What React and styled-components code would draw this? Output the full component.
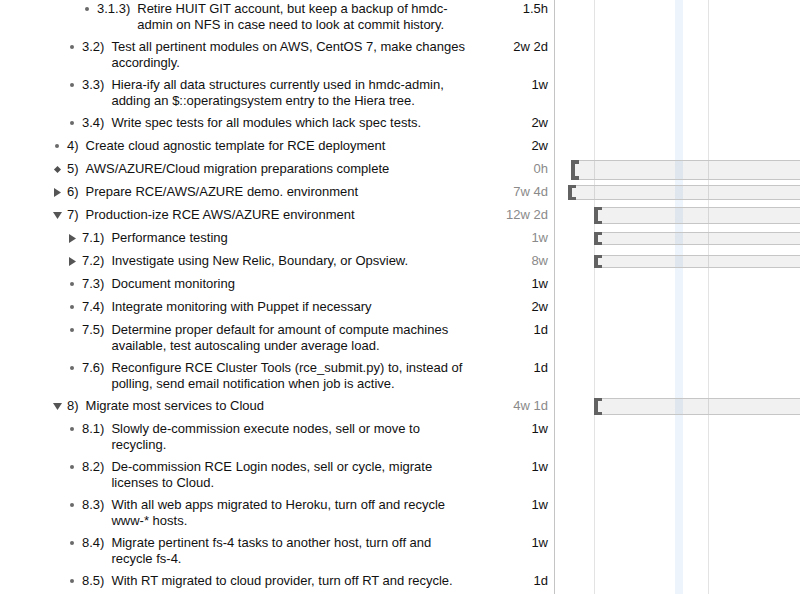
import styled, { createGlobalStyle } from "styled-components";

const GlobalStyle = createGlobalStyle`
  html, body {
    margin: 0;
    padding: 0;
    background: #fff;
    overflow: hidden;
  }
  body {
    font-family: "Liberation Sans", Arial, Helvetica, sans-serif;
    font-size: 13px;
    color: #111;
  }
`;

const Screen = styled.div`
  display: flex;
  flex-direction: column;
  height: 100vh;
  overflow: hidden;
`;

const List = styled.div`
  display: flex;
  flex-direction: column;
  margin-top: -2px;
  flex: 1;
`;

const Row = styled.div`
  display: grid;
  grid-template-columns: 470px 84px 1fr;
  min-height: 23px;
  flex: ${(p) => (p.$filler ? 1 : "none")};
`;

const OutlineCell = styled.div`
  display: flex;
  align-items: flex-start;
  padding: 3px 0 3px ${(p) => 37 + p.$level * 15}px;
  line-height: 16px;
`;

const MarkerBox = styled.span`
  flex: none;
  width: 10px;
  height: 16px;
  margin-right: 5px;
  display: flex;
  align-items: center;
  justify-content: center;
`;

const Bullet = styled.span`
  width: 4px;
  height: 4px;
  border-radius: 50%;
  background: #6a6a6a;
`;

const Diamond = styled.span`
  width: 5px;
  height: 5px;
  background: #505050;
  transform: rotate(45deg);
`;

const Number = styled.span`
  flex: none;
  margin-right: 7px;
`;

const Title = styled.span`
  flex: 1;
`;

const Duration = styled.div`
  padding: 3px 6px 3px 0;
  line-height: 16px;
  text-align: right;
  color: ${(p) => (p.$computed ? "#8a8a8a" : "#111")};
`;

const GanttCell = styled.div`
  border-left: 1px solid #c4c4c4;
  overflow: hidden;
  display: flex;
  flex-direction: column;
  align-items: flex-start;
  background-image: linear-gradient(
    to right,
    transparent 39px,
    #e3e3e3 39px,
    #e3e3e3 40px,
    transparent 40px,
    transparent 120px,
    #edf4fc 120px,
    #edf4fc 128px,
    transparent 128px,
    transparent 153px,
    #e3e3e3 153px,
    #e3e3e3 154px,
    transparent 154px
  );
`;

const Bar = styled.div`
  box-sizing: border-box;
  position: relative;
  width: 400px;
  height: ${(p) => p.$h}px;
  margin-top: ${(p) => p.$top}px;
  margin-left: ${(p) => p.$x}px;
  background: rgba(0, 0, 0, 0.055);
  border-top: 1px solid #c6c6c6;
  border-bottom: 1px solid #c6c6c6;

  &::before {
    content: "";
    position: absolute;
    left: 0;
    top: -1px;
    bottom: -1px;
    width: 8px;
    background: #626262;
  }
  &::after {
    content: "";
    position: absolute;
    left: 4px;
    width: 4px;
    top: ${(p) => (p.$h > 18 ? 3 : 2)}px;
    bottom: ${(p) => (p.$h > 18 ? 3 : 2)}px;
    background: #f1f1f1;
  }
`;

function Marker({ kind }) {
  if (kind === "bullet") return <MarkerBox><Bullet /></MarkerBox>;
  if (kind === "diamond") return <MarkerBox><Diamond /></MarkerBox>;
  if (kind === "closed")
    return (
      <MarkerBox>
        <svg width="7" height="9" viewBox="0 0 7 9">
          <polygon points="0,0 7,4.5 0,9" fill="#555" />
        </svg>
      </MarkerBox>
    );
  return (
    <MarkerBox>
      <svg width="9" height="7" viewBox="0 0 9 7">
        <polygon points="0,0 9,0 4.5,7" fill="#555" />
      </svg>
    </MarkerBox>
  );
}

const rows = [
  { lvl: 3, m: "bullet", n: "3.1.3)", t: "Retire HUIT GIT account, but keep a backup of hmdc-admin on NFS in case need to look at commit history.", d: "1.5h" },
  { lvl: 2, m: "bullet", n: "3.2)", t: "Test all pertinent modules on AWS, CentOS 7, make changes accordingly.", d: "2w 2d" },
  { lvl: 2, m: "bullet", n: "3.3)", t: "Hiera-ify all data structures currently used in hmdc-admin, adding an $::operatingsystem entry to the Hiera tree.", d: "1w" },
  { lvl: 2, m: "bullet", n: "3.4)", t: "Write spec tests for all modules which lack spec tests.", d: "2w" },
  { lvl: 1, m: "bullet", n: "4)", t: "Create cloud agnostic template for RCE deployment", d: "2w" },
  { lvl: 1, m: "diamond", n: "5)", t: "AWS/AZURE/Cloud migration preparations complete", d: "0h", c: true, bar: { x: 16, top: 2, h: 20 } },
  { lvl: 1, m: "closed", n: "6)", t: "Prepare RCE/AWS/AZURE demo. environment", d: "7w 4d", c: true, bar: { x: 13, top: 4, h: 15 } },
  { lvl: 1, m: "open", n: "7)", t: "Production-ize RCE AWS/AZURE environment", d: "12w 2d", c: true, bar: { x: 39, top: 3, h: 17 } },
  { lvl: 2, m: "closed", n: "7.1)", t: "Performance testing", d: "1w", c: true, bar: { x: 39, top: 5, h: 13 } },
  { lvl: 2, m: "closed", n: "7.2)", t: "Investigate using New Relic, Boundary, or Opsview.", d: "8w", c: true, bar: { x: 39, top: 5, h: 13 } },
  { lvl: 2, m: "bullet", n: "7.3)", t: "Document monitoring", d: "1w" },
  { lvl: 2, m: "bullet", n: "7.4)", t: "Integrate monitoring with Puppet if necessary", d: "2w" },
  { lvl: 2, m: "bullet", n: "7.5)", t: "Determine proper default for amount of compute machines available, test autoscaling under average load.", d: "1d" },
  { lvl: 2, m: "bullet", n: "7.6)", t: "Reconfigure RCE Cluster Tools (rce_submit.py) to, instead of polling, send email notification when job is active.", d: "1d" },
  { lvl: 1, m: "open", n: "8)", t: "Migrate most services to Cloud", d: "4w 1d", c: true, bar: { x: 39, top: 3, h: 17 } },
  { lvl: 2, m: "bullet", n: "8.1)", t: "Slowly de-commission execute nodes, sell or move to recycling.", d: "1w" },
  { lvl: 2, m: "bullet", n: "8.2)", t: "De-commission RCE Login nodes, sell or cycle, migrate licenses to Cloud.", d: "1w" },
  { lvl: 2, m: "bullet", n: "8.3)", t: "With all web apps migrated to Heroku, turn off and recycle www-* hosts.", d: "1w" },
  { lvl: 2, m: "bullet", n: "8.4)", t: "Migrate pertinent fs-4 tasks to another host, turn off and recycle fs-4.", d: "1w" },
  { lvl: 2, m: "bullet", n: "8.5)", t: "With RT migrated to cloud provider, turn off RT and recycle.", d: "1d" },
];

export default function App() {
  return (
    <Screen>
      <GlobalStyle />
      <List>
        {rows.map((r) => (
          <Row key={r.n}>
            <OutlineCell $level={r.lvl}>
              <Marker kind={r.m} />
              <Number>{r.n}</Number>
              <Title>{r.t}</Title>
            </OutlineCell>
            <Duration $computed={r.c}>{r.d}</Duration>
            <GanttCell>
              {r.bar && <Bar $x={r.bar.x} $top={r.bar.top} $h={r.bar.h} />}
            </GanttCell>
          </Row>
        ))}
        <Row $filler>
          <div />
          <div />
          <GanttCell />
        </Row>
      </List>
    </Screen>
  );
}
